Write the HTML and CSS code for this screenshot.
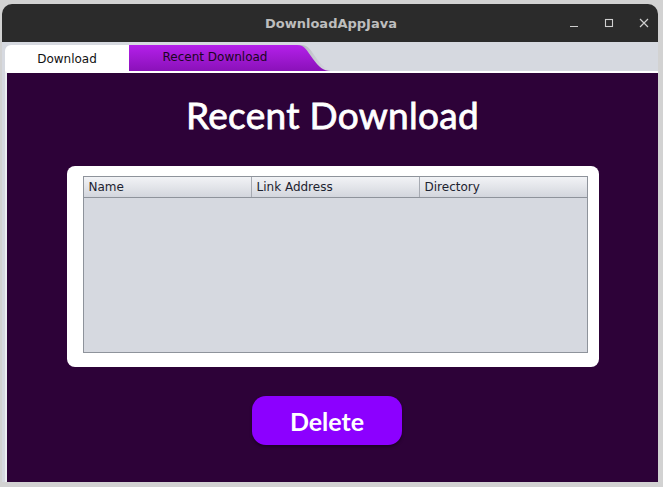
FILE: index.html
```html
<!DOCTYPE html>
<html>
<head>
<meta charset="utf-8">
<link rel="stylesheet" href="styles.css">
</head>
<body>
<div class="window">
  <div class="titlebar">
    <div class="spacer"></div>
    <div class="title">DownloadAppJava</div>
    <div class="controls">
      <svg class="ctl" width="10" height="10" viewBox="0 0 10 10"><path d="M1 8.5H9" stroke="#cfcfcf" stroke-width="1.2" fill="none"/></svg>
      <svg class="ctl" width="10" height="10" viewBox="0 0 10 10"><rect x="1.5" y="1.5" width="7" height="7" stroke="#cfcfcf" stroke-width="1.1" fill="none"/></svg>
      <svg class="ctl" width="10" height="10" viewBox="0 0 10 10"><path d="M1 1L9 9M9 1L1 9" stroke="#cfcfcf" stroke-width="1.2" fill="none"/></svg>
    </div>
  </div>
  <div class="client">
    <div class="tabs">
      <div class="tab tab-download">Download</div>
      <div class="tab tab-recent">Recent Download</div>
      <svg class="tab-curve" width="42" height="26" viewBox="0 0 42 26">
        <defs>
          <linearGradient id="pg" x1="0" y1="0" x2="0" y2="1">
            <stop offset="0" stop-color="#b420ea"/>
            <stop offset="1" stop-color="#8a11b9"/>
          </linearGradient>
          <linearGradient id="sg" x1="0" y1="0" x2="1" y2="0">
            <stop offset="0" stop-color="#9a9ca3" stop-opacity="0.7"/>
            <stop offset="1" stop-color="#d6d9e0" stop-opacity="0"/>
          </linearGradient>
        </defs>
        <path d="M0 0H4C12 0 14 6 20 14C26 22 30 26 42 26H0Z" fill="url(#sg)" transform="translate(4,0)"/>
        <path d="M0 0H4C12 0 14 6 20 14C26 22 30 26 38 26H0Z" fill="url(#pg)"/>
      </svg>
    </div>
    <div class="pane">
      <h1 class="heading">Recent Download</h1>
      <div class="card">
        <div class="table">
          <div class="thead">
            <div class="th">Name</div>
            <div class="th">Link Address</div>
            <div class="th">Directory</div>
          </div>
          <div class="tbody"></div>
        </div>
      </div>
      <div class="actions">
        <button class="delete">Delete</button>
      </div>
    </div>
  </div>
</div>
</body>
</html>
```

FILE: styles.css
```css
html, body {
  margin: 0;
  padding: 0;
}
body {
  background: #d2d2d2;
  width: 663px;
  height: 487px;
  overflow: hidden;
}
.window {
  margin: 4px 5px 0 2px;
  width: 656px;
  border-radius: 10px 10px 0 0;
  overflow: hidden;
}
.titlebar {
  height: 38px;
  background: #2b2b2b;
  display: grid;
  grid-template-columns: 1fr auto 1fr;
  align-items: center;
}
.title {
  font-family: "DejaVu Sans", sans-serif;
  font-weight: bold;
  font-size: 13px;
  color: #bdbdbd;
  padding-left: 2px;
}
.controls {
  display: flex;
  justify-content: flex-end;
  align-items: center;
  gap: 25px;
  padding-right: 9px;
}
.ctl {
  display: block;
}
.client {
  background: #d6d9e0;
  padding-left: 3px;
}
.tabs {
  height: 29px;
  display: flex;
  align-items: flex-end;
}
.tab {
  height: 26px;
  display: flex;
  align-items: center;
  justify-content: center;
  font-family: "DejaVu Sans", sans-serif;
  font-size: 12px;
}
.tab-download {
  width: 124px;
  background: #ffffff;
  color: #111;
  border-radius: 6px 0 0 0;
  padding-top: 2px;
  box-sizing: border-box;
}
.tab-recent {
  width: 164px;
  background: linear-gradient(#b420ea, #8a11b9);
  color: #1b0522;
  padding-bottom: 2px;
  box-sizing: border-box;
  padding-left: 8px;
}
.tab-curve {
  display: block;
}
.pane {
  height: 409px;
  background: #2d0238;
  border-top: 2px solid #ffffff;
  border-left: 2px solid #eceef2;
  display: flex;
  flex-direction: column;
}
.heading {
  margin: 22px 0 0 0;
  height: 40px;
  line-height: 40px;
  text-align: center;
  font-family: "Lato", sans-serif;
  font-weight: normal;
  font-size: 37px;
  color: #ffffff;
  -webkit-text-stroke: 0.8px #ffffff;
  letter-spacing: 0.3px;
}
.card {
  margin: 31px auto 0 auto;
  width: 532px;
  height: 201px;
  box-sizing: border-box;
  background: #ffffff;
  border-radius: 8px;
  padding: 10px 11px 16px 16px;
}
.table {
  height: 100%;
  border: 1px solid #8e939b;
  background: #d6d9e0;
  display: flex;
  flex-direction: column;
}
.thead {
  height: 20px;
  display: grid;
  grid-template-columns: 168px 168px 1fr;
  background: linear-gradient(#f2f3f6, #d3d6dd);
  border-bottom: 1px solid #8e939b;
}
.th {
  font-family: "DejaVu Sans", sans-serif;
  font-size: 12px;
  color: #1d2330;
  line-height: 20px;
  padding-left: 5px;
  border-right: 1px solid #a6aab2;
}
.th:last-child {
  border-right: none;
}
.tbody {
  flex: 1;
}
.actions {
  margin-top: 29px;
  display: flex;
  justify-content: center;
  padding-right: 11px;
}
.delete {
  width: 150px;
  height: 49px;
  border: none;
  border-radius: 14px;
  background: #8c00ff;
  color: #ffffff;
  font-family: "Lato", sans-serif;
  font-weight: bold;
  font-size: 25px;
  padding: 0;
  box-shadow: 0 2px 3px rgba(0,0,0,0.35);
}
```
